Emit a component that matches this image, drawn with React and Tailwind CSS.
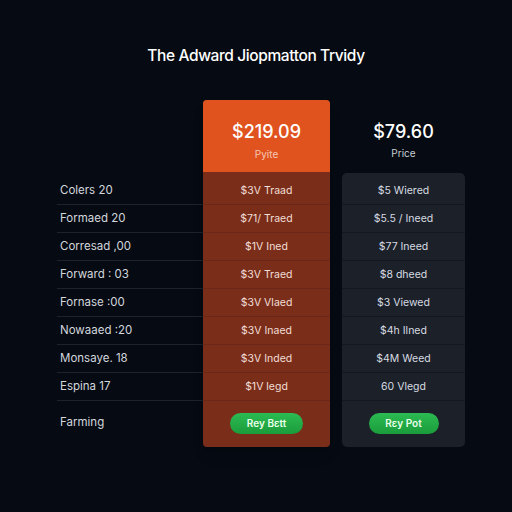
import React from 'react';

const rows = [
    { label: 'Colers 20', a: '$3V Traad', b: '$5 Wiered' },
    { label: 'Formaed 20', a: '$71/ Traed', b: '$5.5 / Ineed' },
    { label: 'Corresad ,00', a: '$1V Ined', b: '$77 Ineed' },
    { label: 'Forward : 03', a: '$3V Traed', b: '$8 dheed' },
    { label: 'Fornase :00', a: '$3V Vlaed', b: '$3 Viewed' },
    { label: 'Nowaaed :20', a: '$3V Inaed', b: '$4h Ilned' },
    { label: 'Monsaye. 18', a: '$3V Inded', b: '$4M Weed' },
    { label: 'Espina 17', a: '$1V legd', b: '60 Vlegd' },
];

const App = () => {
    return (
        <div className="w-[512px] h-[512px] bg-[#060a12] overflow-hidden font-['Inter',sans-serif]">
            <h1 className="pt-[44px] h-[100px] text-center text-[15.5px] font-medium text-white tracking-tight">
                The Adward Jiopmatton Trvidy
            </h1>

            <div className="flex pl-[57px]">
                {/* labels */}
                <div className="w-[146px] flex flex-col">
                    <div className="h-[77px]" />
                    {rows.map((r, i) => (
                        <div key={i} className="h-[28px] flex items-center pl-[3px] border-b border-[#1d222b] text-[11.5px] text-[#d3d7de]">
                            {r.label}
                        </div>
                    ))}
                    <div className="h-[44px] flex items-center pl-[3px] text-[11.5px] text-[#d3d7de]">Farming</div>
                </div>

                {/* highlighted plan */}
                <div className="w-[127px] flex flex-col rounded-[4px] overflow-hidden bg-[#7a2e1a] shadow-lg">
                    <div className="h-[72px] bg-[#e0531f] flex flex-col items-center justify-center pt-[10px]">
                        <div className="text-[18px] leading-none font-medium text-white">$219.09</div>
                        <div className="mt-[8px] text-[10px] leading-none text-[#f6c7b4]">Pyite</div>
                    </div>
                    <div className="h-[5px]" />
                    {rows.map((r, i) => (
                        <div key={i} className="h-[28px] flex items-center justify-center border-b border-[#6c2816] text-[10.5px] text-[#f1ddd6]">
                            {r.a}
                        </div>
                    ))}
                    <div className="h-[46px] flex items-center justify-center pb-[2px]">
                        <button className="w-[73px] h-[21px] rounded-full bg-gradient-to-b from-[#2cbb52] to-[#1a9c3b] text-[10px] font-semibold text-[#e8ffe9]">
                            Rеy Bεtt
                        </button>
                    </div>
                </div>

                {/* second plan */}
                <div className="w-[123px] ml-[12px] flex flex-col">
                    <div className="h-[73px] flex flex-col items-center justify-center pt-[8px]">
                        <div className="text-[18px] leading-none font-medium text-white">$79.60</div>
                        <div className="mt-[7px] text-[10px] leading-none text-[#c9ced6]">Price</div>
                    </div>
                    <div className="flex-1 bg-[#1c2129] rounded-[5px] flex flex-col pt-[4px]">
                        {rows.map((r, i) => (
                            <div key={i} className="h-[28px] flex items-center justify-center border-b border-[#141820] text-[10.5px] text-[#d7dbe2]">
                                {r.b}
                            </div>
                        ))}
                        <div className="h-[46px] flex items-center justify-center pb-[2px]">
                            <button className="w-[70px] h-[21px] rounded-full bg-gradient-to-b from-[#2cbb52] to-[#1a9c3b] text-[10px] font-semibold text-[#e8ffe9]">
                                Rεy Pot
                            </button>
                        </div>
                    </div>
                </div>
            </div>
        </div>
    );
};

export default App;
